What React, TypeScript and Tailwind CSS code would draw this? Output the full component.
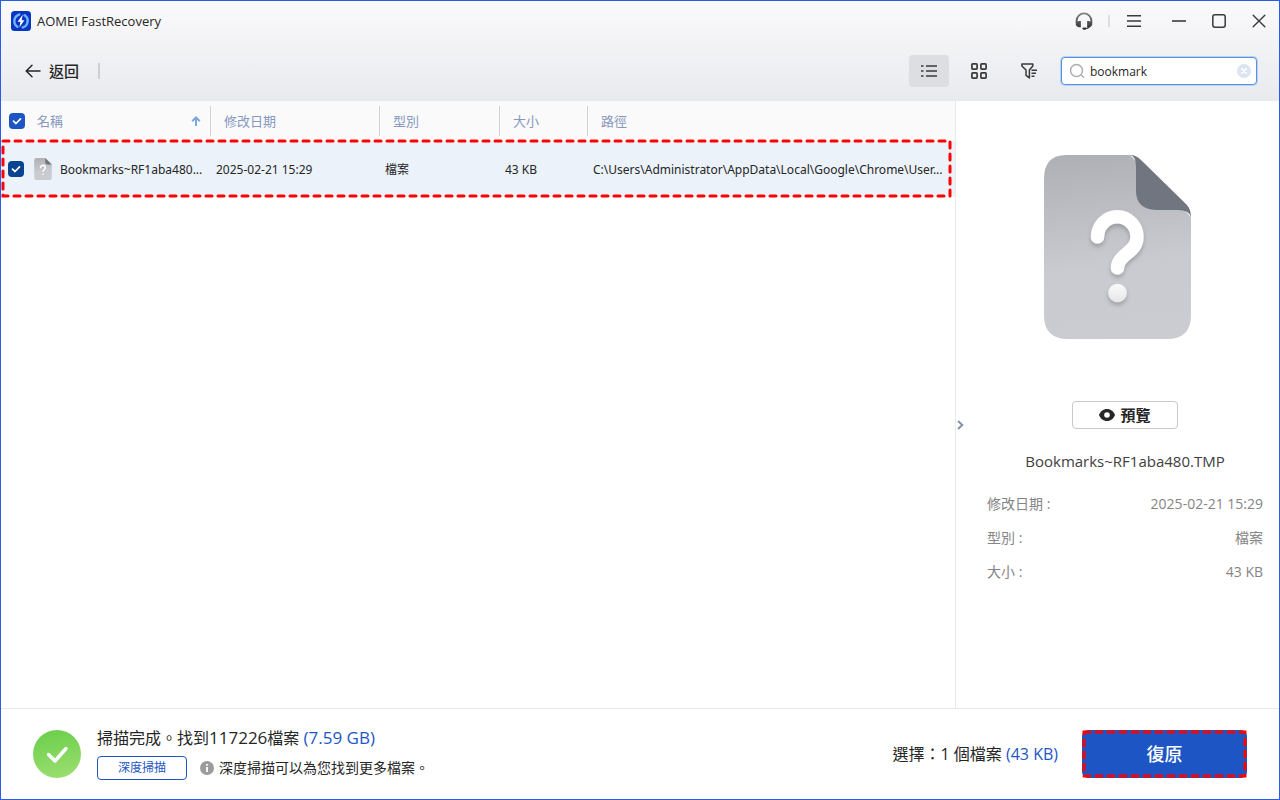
import { useId, useState } from 'react';
import type { ReactNode } from 'react';

function Logo() {
  return (
    <svg viewBox="0 0 20 20" className="size-5 shrink-0" aria-hidden="true">
      <rect width="20" height="20" rx="3.5" fill="#0a34c4" />
      <path d="M8.2 3.6A6.800 6.800 0 0 0 6.400 15.800" fill="none" stroke="#6fb4ff" strokeWidth="2.400" strokeLinecap="round" />
      <path d="M11.800 16.400A6.800 6.800 0 0 0 13.600 4.200" fill="none" stroke="#6fb4ff" strokeWidth="2.400" strokeLinecap="round" />
      <path d="M11.800 3.600 6.600 10.800h2.800l-1 5.800 5-7.400h-2.800z" fill="#fff" />
    </svg>
  );
}

function HeadsetIcon() {
  const id = useId();
  return (
    <svg viewBox="0 0 18 18" className="size-[18px]" aria-hidden="true">
      <defs>
        <linearGradient id={id} x1="0" y1="0" x2="0" y2="18" gradientUnits="userSpaceOnUse">
          <stop offset="0" stopColor="#8a8a8a" />
          <stop offset="1" stopColor="#2a2a2a" />
        </linearGradient>
      </defs>
      <g stroke={`url(#${id})`} fill="none" strokeWidth="1.800">
        <path d="M1.600 11V8.800a7.400 7.400 0 0 1 14.800 0V11" />
        <path d="M15.500 13c-.600 2-2.400 3.100-4.500 3.500" strokeWidth="1.200" />
      </g>
      <g fill={`url(#${id})`}>
        <path d="M5.900 9v6.200H4.400C2.400 15.200.700 14 .700 12.100S2.400 9 4.400 9z" />
        <path d="M12.100 9v6.200h1.500c2 0 3.700-1.200 3.700-3.100S15.600 9 13.600 9z" />
        <rect x="7.400" y="15.500" width="4" height="2.200" rx="1.100" />
      </g>
    </svg>
  );
}

function UnknownFileIcon({ className }: { className: string }) {
  const id = useId();
  return (
    <svg viewBox="0 0 147 184" className={className} aria-hidden="true">
      <defs>
        <linearGradient id={`${id}b`} x1="0.45" y1="0" x2="0.55" y2="1">
          <stop offset="0" stopColor="#b0b1b6" />
          <stop offset="0.6" stopColor="#cacbd0" />
          <stop offset="1" stopColor="#cbccd1" />
        </linearGradient>
        <linearGradient id={`${id}d`} x1="0" y1="0" x2="0" y2="1">
          <stop offset="0" stopColor="#fbfbfb" />
          <stop offset="1" stopColor="#e6e6e8" />
        </linearGradient>
        <filter id={`${id}s`} x="-30%" y="-30%" width="160%" height="160%">
          <feDropShadow dx="0" dy="3" stdDeviation="2" floodColor="#6b6c72" floodOpacity="0.45" />
        </filter>
      </defs>
      <path d="M22 0H86L147 62V160Q147 184 123 184H24Q0 184 0 160V24Q0 0 22 0Z" fill={`url(#${id}b)`} />
      <path d="M86 0Q92 0 97 5L142 49Q147 54 147 62Q145 55 134 55H112Q92 54 92 36V12Q92 1 86 0Z" fill="#70757f" />
      <g filter={`url(#${id}s)`}>
        <path
          d="M53.500 82A19.500 20 0 0 1 93 82C93 98 73.500 99 73.500 113"
          fill="none"
          stroke="#fff"
          strokeWidth="13.500"
          strokeLinecap="round"
        />
        <circle cx="73.500" cy="138" r="9.300" fill={`url(#${id}d)`} />
      </g>
    </svg>
  );
}

function DashedFrame({ className }: { className: string }) {
  return (
    <span className={`pointer-events-none absolute ${className}`} aria-hidden="true">
      <svg className="block h-full w-full overflow-visible">
        <rect width="100%" height="100%" fill="none" stroke="#ff0000" strokeWidth="3" strokeDasharray="6 6" strokeLinecap="round" />
      </svg>
    </span>
  );
}

function Check({ label, tone }: { label: string; tone: string }) {
  return (
    <span className="relative block size-4 shrink-0">
      <input type="checkbox" defaultChecked aria-label={label} className={`peer block size-4 appearance-none rounded border border-transparent ${tone}`} />
      <svg viewBox="0 0 16 16" className="pointer-events-none absolute inset-0 hidden size-4 peer-checked:block" aria-hidden="true">
        <path d="M4.500 8.200 7 10.500 11.500 5.800" fill="none" stroke="#fff" strokeWidth="1.700" strokeLinecap="round" strokeLinejoin="round" />
      </svg>
    </span>
  );
}

function IconButton({ label, className = '', children }: { label: string; className?: string; children: ReactNode }) {
  return (
    <button type="button" aria-label={label} className={`flex h-8 w-10 items-center justify-center rounded text-[#3a3a3a] ${className}`}>
      {children}
    </button>
  );
}

function HeaderCell({ children, last = false }: { children: ReactNode; last?: boolean }) {
  return (
    <th scope="col" className="p-0 font-normal">
      <div className={`flex h-[30px] items-center pl-[13px] ${last ? '' : 'border-r border-[#cfd1d6]'}`}>{children}</div>
    </th>
  );
}

const details = [
  ['修改日期 :', '2025-02-21 15:29'],
  ['型別 :', '檔案'],
  ['大小 :', '43 KB'],
];

export default function App() {
  const [query, setQuery] = useState('bookmark');

  return (
    <div
      lang="zh-Hant"
      className="flex min-h-screen flex-col border border-[#2b5ce6] bg-white font-['Open_Sans','Noto_Sans_CJK_TC',sans-serif] text-[#262626]"
    >
      <header className="bg-linear-to-b from-[#fafafb] to-[#e9eaee]">
        <div className="flex h-10 items-center pl-[10px]">
          <Logo />
          <h1 className="ml-[6px] text-[13px] leading-5">AOMEI FastRecovery</h1>
          <div className="ml-auto flex items-center">
            <IconButton label="客服">
              <HeadsetIcon />
            </IconButton>
            <span className="mx-1 h-3 w-0.5 bg-[#dcdde0]" />
            <IconButton label="選單">
              <svg viewBox="0 0 14 12" className="h-3 w-[14px]" stroke="currentColor" strokeWidth="1.500" aria-hidden="true">
                <path d="M0 .800h14M0 6h14M0 11.200h14" />
              </svg>
            </IconButton>
            <IconButton label="最小化" className="ml-[5px]">
              <svg viewBox="0 0 14 14" className="size-[14px]" stroke="currentColor" strokeWidth="1.600" aria-hidden="true">
                <path d="M0 7h14" />
              </svg>
            </IconButton>
            <IconButton label="最大化">
              <svg viewBox="0 0 14 14" className="size-[14px]" fill="none" stroke="currentColor" strokeWidth="1.500" aria-hidden="true">
                <rect x=".800" y=".800" width="12.400" height="12.400" rx="2.200" />
              </svg>
            </IconButton>
            <IconButton label="關閉">
              <svg viewBox="0 0 14 14" className="size-[14px]" stroke="currentColor" strokeWidth="1.400" strokeLinecap="round" aria-hidden="true">
                <path d="m1.200 1.200 11.600 11.600M12.800 1.200 1.200 12.800" />
              </svg>
            </IconButton>
          </div>
        </div>

        <div className="flex h-[60px] items-center pr-[22px] pl-6">
          <button type="button" className="flex items-center gap-2 text-[15px] leading-5 font-medium">
            <svg viewBox="0 0 16 14" className="h-[14px] w-4" fill="none" stroke="currentColor" strokeWidth="1.500" strokeLinecap="round" strokeLinejoin="round" aria-hidden="true">
              <path d="M7 1.200 1.200 7 7 12.800M1.200 7H15" />
            </svg>
            返回
          </button>
          <span className="ml-[19px] h-4 w-0.5 bg-[#cfcfd3]" />
          <div className="ml-auto flex items-center gap-[10px]">
            <IconButton label="清單檢視" className="bg-[#dddee1]">
              <svg viewBox="0 0 16 14" className="h-[14px] w-4" stroke="currentColor" strokeWidth="1.700" aria-hidden="true">
                <path d="M0 2h2.500M5 2h11M0 7h2.500M5 7h11M0 12h2.500M5 12h11" />
              </svg>
            </IconButton>
            <IconButton label="格狀檢視">
              <svg viewBox="0 0 16 16" className="size-4" fill="none" stroke="currentColor" strokeWidth="1.700" aria-hidden="true">
                <rect x=".900" y=".900" width="5.200" height="5.200" rx=".800" />
                <rect x="9.900" y=".900" width="5.200" height="5.200" rx=".800" />
                <rect x=".900" y="9.900" width="5.200" height="5.200" rx=".800" />
                <rect x="9.900" y="9.900" width="5.200" height="5.200" rx=".800" />
              </svg>
            </IconButton>
            <IconButton label="篩選">
              <svg viewBox="0 0 16 16" className="size-4" fill="none" stroke="currentColor" strokeWidth="1.500" strokeLinejoin="round" aria-hidden="true">
                <path d="M.900.900H11.800V3L8.400 7V14.900L5 12.300V7L.900 3Z" />
                <path d="M10.500 7.300H16M10.500 10.300h4.500M10.500 13.300h3" />
              </svg>
            </IconButton>
          </div>
          <div className="ml-3 flex h-7 w-[196px] items-center rounded border border-[#5592e2] bg-white pr-[5px] pl-[7px] ring-1 ring-[#b9d2f2]">
            <svg viewBox="0 0 16 16" className="size-4 shrink-0" fill="none" stroke="#adadad" strokeWidth="1.500" strokeLinecap="round" aria-hidden="true">
              <circle cx="7.500" cy="7.500" r="6" />
              <path d="m12 12 2.600 2" />
            </svg>
            <input
              type="text"
              aria-label="搜尋"
              value={query}
              onChange={(e) => setQuery(e.target.value)}
              className="ml-[5px] min-w-0 flex-1 bg-transparent pt-0.5 text-[12px] leading-5 outline-none"
            />
            <button type="button" aria-label="清除" onClick={() => setQuery('')}>
              <svg viewBox="0 0 14 14" className="size-[14px]" aria-hidden="true">
                <circle cx="7" cy="7" r="7" fill="#dbe4ef" />
                <path d="m4.800 4.800 4.400 4.400M9.200 4.800 4.800 9.200" stroke="#fff" strokeWidth="1.700" strokeLinecap="round" />
              </svg>
            </button>
          </div>
        </div>
      </header>

      <main className="flex flex-1">
        <section className="min-w-0 flex-1 border-r border-[#e8e8e8]">
          <table className="w-full table-fixed border-collapse text-left">
            <colgroup>
              <col className="w-[210px]" />
              <col className="w-[169px]" />
              <col className="w-[120px]" />
              <col className="w-[88px]" />
              <col />
            </colgroup>
            <thead className="bg-[#fafafa] text-[13px] leading-5 text-[#8798bd]">
              <tr className="h-10">
                <th scope="col" className="p-0 font-normal">
                  <div className="flex h-[30px] items-center border-r border-[#cfd1d6] pr-[9px] pl-2">
                    <Check label="全選" tone="bg-[#1d56c4]" />
                    <span className="ml-3">名稱</span>
                    <svg viewBox="0 0 10 10" className="ml-auto size-[10px]" fill="none" stroke="#7ba6df" strokeWidth="2" aria-hidden="true">
                      <path d="M5 10V1.400M1.200 5.200 5 1.400 8.800 5.200" />
                    </svg>
                  </div>
                </th>
                <HeaderCell>修改日期</HeaderCell>
                <HeaderCell>型別</HeaderCell>
                <HeaderCell>大小</HeaderCell>
                <HeaderCell last>路徑</HeaderCell>
              </tr>
            </thead>
            <tbody className="font-['Noto_Sans','Noto_Sans_CJK_TC',sans-serif] text-[12px] leading-5">
              <tr className="relative h-14 bg-[#ebf2fa]">
                <td className="p-0">
                  <div className="flex items-center pl-[7px]">
                    <Check label="Bookmarks~RF1aba480.TMP" tone="bg-[#0b4292]" />
                    <UnknownFileIcon className="ml-[10px] h-[22px] w-[18px] shrink-0" />
                    <span className="ml-2 pt-0.5 whitespace-nowrap">Bookmarks~RF1aba480...</span>
                  </div>
                </td>
                <td className="p-0 pt-0.5 pl-[5px] whitespace-nowrap">2025-02-21 15:29</td>
                <td className="p-0 pt-0.5 pl-[5px]">檔案</td>
                <td className="p-0 pt-0.5 pl-[5px] whitespace-nowrap">43 KB</td>
                <td className="p-0 pt-0.5 pl-[5px] whitespace-nowrap">
                  C:\Users\Administrator\AppData\Local\Google\Chrome\User...
                  <DashedFrame className="top-0 right-[5px] bottom-px left-0.5" />
                </td>
              </tr>
            </tbody>
          </table>
        </section>

        <aside className="flex w-[323px] shrink-0">
          <div className="flex w-[15px] items-center pt-10">
            <button type="button" aria-label="收合" className="pl-px">
              <svg viewBox="0 0 7 10" className="h-[10px] w-[7px]" fill="none" stroke="#8593a6" strokeWidth="2" aria-hidden="true">
                <path d="M1 1 5.300 5 1 9" />
              </svg>
            </button>
          </div>
          <div className="flex flex-1 flex-col px-4 pt-[54px]">
            <div className="flex justify-center pr-4">
              <UnknownFileIcon className="h-[184px] w-[147px]" />
            </div>
            <button
              type="button"
              className="mt-[62px] flex h-7 w-[106px] items-center justify-center gap-[5px] self-center rounded border border-[#c9c9c9] bg-white text-[15px] leading-5 font-bold"
            >
              <svg viewBox="0 0 16 12" className="h-3 w-4" aria-hidden="true">
                <path d="M8 0C4.200 0 1.200 2.600 0 6c1.200 3.400 4.200 6 8 6s6.800-2.600 8-6C14.800 2.600 11.800 0 8 0Z" fill="#262626" />
                <circle cx="8" cy="6" r="2.800" fill="#fff" />
              </svg>
              預覽
            </button>
            <h2 className="mt-[22px] text-center text-[15px] leading-5 text-[#404040]">Bookmarks~RF1aba480.TMP</h2>
            <dl className="mt-4 text-[14px] leading-5 text-[#858585]">
              {details.map(([term, value]) => (
                <div key={term} className="flex h-[34px] items-center justify-between">
                  <dt>{term}</dt>
                  <dd>{value}</dd>
                </div>
              ))}
            </dl>
          </div>
        </aside>
      </main>

      <footer className="flex h-[91px] items-center border-t border-[#e8e8e8] px-8">
        <svg viewBox="0 0 48 48" className="size-12 shrink-0" aria-hidden="true">
          <defs>
            <linearGradient id="done" x1="0.4" y1="0" x2="0.6" y2="1">
              <stop offset="0" stopColor="#6dcf4b" />
              <stop offset="1" stopColor="#9ade70" />
            </linearGradient>
          </defs>
          <circle cx="24" cy="24" r="24" fill="url(#done)" />
          <path d="m15.500 24.500 6.500 6.500L33 18.500" fill="none" stroke="#fff" strokeWidth="3.500" strokeLinecap="round" strokeLinejoin="round" />
        </svg>
        <div className="ml-4 flex flex-col gap-2">
          <p className="text-[16px] leading-5">
            掃描完成。找到<span className="text-[17px]">117226</span>檔案 <span className="text-[17px] text-[#1d56c4]">(7.59 GB)</span>
          </p>
          <div className="flex items-center">
            <button type="button" className="h-6 w-[90px] rounded border border-[#1d56c4] text-[12px] leading-5 text-[#1d56c4]">
              深度掃描
            </button>
            <svg viewBox="0 0 14 14" className="ml-[13px] size-[14px]" aria-hidden="true">
              <circle cx="7" cy="7" r="7" fill="#9c9c9c" />
              <path d="M7 3v1.800M7 6v5" stroke="#fff" strokeWidth="1.800" />
            </svg>
            <span className="ml-[5px] text-[14px] leading-5">深度掃描可以為您找到更多檔案。</span>
          </div>
        </div>
        <p className="ml-auto text-[16px] leading-5">
          選擇：1 個檔案 <span className="text-[#1d56c4]">(43 KB)</span>
        </p>
        <button type="button" className="relative ml-6 h-12 w-[165px] rounded-md bg-[#1d56c4] text-[18px] leading-6 font-medium text-white">
          復原
          <DashedFrame className="inset-0.5" />
        </button>
      </footer>
    </div>
  );
}
